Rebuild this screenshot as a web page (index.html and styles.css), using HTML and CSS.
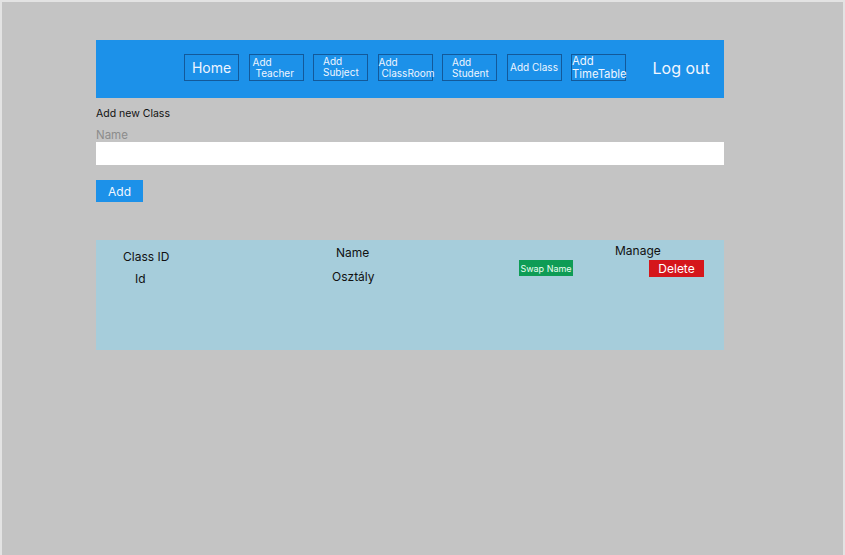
FILE: index.html
```html
<!DOCTYPE html>
<html>
<head>
<meta charset="utf-8">
<link rel="stylesheet" href="styles.css">
</head>
<body>
<div class="frame">
  <div class="page">
    <nav class="nav">
      <a class="nb nb-home">Home</a>
      <a class="nb nb-teacher"><span>Add</span><span class="ind">Teacher</span></a>
      <a class="nb nb-subject"><span>Add</span><span>Subject</span></a>
      <a class="nb nb-room"><span>Add</span><span class="ind">ClassRoom</span></a>
      <a class="nb nb-student"><span>Add</span><span>Student</span></a>
      <a class="nb nb-class">Add Class</a>
      <a class="nb nb-tt"><span>Add</span><span>TimeTable</span></a>
      <a class="logout">Log out</a>
    </nav>
    <div class="form">
      <div class="title">Add new Class</div>
      <label class="label">Name</label>
      <div class="input"></div>
      <button class="add">Add</button>
    </div>
    <div class="table">
      <div class="col col-id">
        <div class="head">Class ID</div>
        <div class="cell">Id</div>
      </div>
      <div class="col col-name">
        <div class="head">Name</div>
        <div class="cell">Osztály</div>
      </div>
      <div class="col col-swap">
        <button class="swap">Swap Name</button>
      </div>
      <div class="col col-manage">
        <div class="head">Manage</div>
        <button class="delete">Delete</button>
      </div>
    </div>
  </div>
</div>
</body>
</html>
```
FILE: styles.css
```css
* { box-sizing: border-box; }
html, body { margin: 0; padding: 0; }
body {
  background: #e3e3e3;
  font-family: Inter, "Noto Sans", sans-serif;
  width: 845px;
  height: 555px;
  overflow: hidden;
}
.frame {
  margin: 2px 2px 0 2px;
  height: 553px;
  background: #c4c4c4;
  padding: 38px 0 0 94px;
}
.page { width: 628px; }
.nav {
  height: 58px;
  background: #1c91e9;
  display: flex;
  align-items: center;
  padding-left: 88px;
  padding-bottom: 3px;
  gap: 9.5px;
}
.nb {
  flex: none;
  width: 55px;
  height: 27px;
  border: 1px solid #13599a;
  color: #eef5ff;
  font-size: 10px;
  line-height: 11px;
  display: flex;
  flex-direction: column;
  justify-content: center;
  padding-left: 3px;
  white-space: nowrap;
}
.nb .ind { padding-left: 3px; }
.nb-home { font-size: 14px; align-items: center; padding-left: 0; }
.nb-subject { padding-left: 9px; margin-top: -1px; }
.nb-room { padding-left: 0; overflow: visible; }
.nb-student { padding-left: 9px; }
.nb-class { align-items: center; padding-left: 0; }
.nb-tt { padding-left: 0; font-size: 11.3px; line-height: 12.5px; }
.logout {
  color: #f2f7ff;
  font-size: 16px;
  margin-left: 17px;
}
.form { padding-top: 9px; }
.title { font-size: 10.5px; color: #111; line-height: 13px; }
.label {
  display: block;
  font-size: 11.5px;
  color: #8c8c8c;
  margin-top: 8px;
  line-height: 14px;
}
.input { height: 23px; background: #fff; }
.add {
  display: block;
  margin-top: 15px;
  width: 47px;
  height: 22px;
  border: 0;
  background: #1c91e9;
  color: #f2f7ff;
  font-family: Inter, sans-serif;
  font-size: 12px;
  padding: 0;
}
.table {
  margin-top: 38px;
  height: 110px;
  background: #a6cddb;
  display: flex;
  color: #111;
  font-size: 12px;
}
.col { display: flex; flex-direction: column; }
.col-id { margin-left: 27px; width: 213px; padding-top: 9px; }
.col-id .cell { margin-left: 12px; margin-top: 7px; }
.col-name { width: 183px; padding-top: 5px; }
.col-name .cell { margin-left: -4px; margin-top: 9px; }
.col-swap { width: 96px; padding-top: 20px; }
.swap {
  width: 54px;
  height: 16px;
  border: 0;
  padding: 0;
  background: #0e9c55;
  color: #eafff2;
  font-family: Inter, sans-serif;
  font-size: 9px;
}
.col-manage { padding-top: 3px; }
.col-manage .head { font-size: 12px; }
.delete {
  margin-left: 34px;
  margin-top: 2px;
  width: 55px;
  height: 17px;
  border: 0;
  padding: 0;
  background: #d5161b;
  color: #fff;
  font-family: Inter, sans-serif;
  font-size: 12px;
}
```
